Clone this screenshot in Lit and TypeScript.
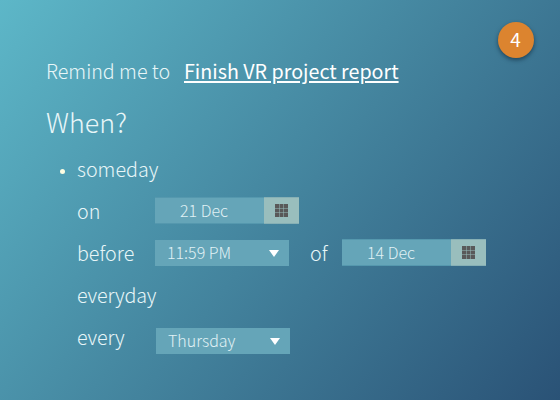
import { LitElement, html, css, svg } from "lit";
import { customElement, property } from "lit/decorators.js";

@customElement("date-field")
class DateField extends LitElement {
  @property() value = "";

  static styles = css`
    :host {
      display: flex;
      width: 144px;
      height: 27px;
      color: #e0f1f5;
      font-size: 16px;
      line-height: 27px;
    }
    .value {
      flex: none;
      box-sizing: border-box;
      width: 109px;
      padding-left: 25px;
      background: #65a5b8;
      box-shadow: inset 0 1px #5598ae, inset 0 -1px #5598ae;
      white-space: nowrap;
    }
    .button {
      display: flex;
      align-items: center;
      justify-content: center;
      width: 35px;
      background: #99bebd;
      box-shadow: inset 0 1px #86b0b5, inset 0 -1px #86b0b5;
    }
    svg { display: block; }
  `;

  render() {
    const steps = [0, 4.5, 9];
    return html`
      <div class="value">${this.value}</div>
      <div class="button">
        <svg width="13" height="13" viewBox="0 0 13 13" fill="#595959">
          ${steps.map((y) => steps.map((x) => svg`<rect x=${x} y=${y} width="4" height="4" />`))}
        </svg>
      </div>
    `;
  }
}

@customElement("select-field")
class SelectField extends LitElement {
  @property() value = "";

  static styles = css`
    :host {
      display: flex;
      box-sizing: border-box;
      justify-content: space-between;
      align-items: center;
      width: 134px;
      height: 26px;
      padding: 0 10px 0 12px;
      background: #65a5b8;
      color: #e0f1f5;
      font-size: 16px;
      line-height: 25px;
      white-space: nowrap;
    }
    span { height: 26px; }
    svg { display: block; }
  `;

  render() {
    return html`
      <span>${this.value}</span>
      <svg width="10" height="7" viewBox="0 0 10 7" fill="#fff"><path d="M0 0h10L5 7z" /></svg>
    `;
  }
}

@customElement("app-root")
class AppRoot extends LitElement {
  static styles = css`
    :host {
      display: block;
      position: relative;
      box-sizing: border-box;
      width: 560px;
      height: 400px;
      padding: 51px 0 0 46px;
      overflow: hidden;
      background: linear-gradient(129deg, #5db7c8 0%, #43839d 52%, #2a5276 100%);
      color: #e8f6f8;
      font-family: "Noto Sans CJK SC", "Noto Sans", sans-serif;
      font-weight: 300;
      font-size: 19.7px;
    }
    .badge {
      position: absolute;
      left: 498px;
      top: 22px;
      width: 36px;
      height: 36px;
      border-radius: 50%;
      background: #dc842f;
      box-shadow: 0 2px 4px rgba(10, 35, 55, 0.6);
      color: #fff;
      font-size: 19px;
      font-weight: 400;
      line-height: 34px;
      text-align: center;
      text-indent: -1px;
    }
    .sentence {
      display: flex;
      height: 40px;
      line-height: 40px;
      white-space: nowrap;
    }
    .lead { width: 138px; }
    .task {
      color: #fff;
      font-weight: 400;
      text-decoration: underline;
      text-decoration-thickness: 2px;
      text-underline-offset: 2px;
    }
    h1 {
      margin: 6px 0 0;
      height: 51px;
      font-size: 26.8px;
      font-weight: 300;
      line-height: 49px;
    }
    ul {
      margin: 0;
      padding: 0 0 0 13px;
      list-style: none;
    }
    li {
      display: flex;
      height: 42px;
      line-height: 42px;
      white-space: nowrap;
    }
    .mark { flex: none; width: 18px; }
    .dot {
      width: 5px;
      height: 5px;
      margin: 21px 0 0 1px;
      border-radius: 50%;
      background: #fdfde2;
    }
    .label { flex: none; width: 78px; }
    .tight { letter-spacing: -0.2px; }
    .of { width: 32px; margin-left: 21px; }
    .on date-field { margin-top: 7px; }
    .before date-field { margin-top: 7px; }
    .before select-field { margin-top: 8px; }
    .every select-field { margin: 12px 0 0 1px; }
  `;

  render() {
    return html`
      <div class="badge">4</div>
      <div class="sentence">
        <span class="lead">Remind me to</span>
        <span class="task">Finish VR project report</span>
      </div>
      <h1>When?</h1>
      <ul>
        <li><span class="mark"><div class="dot"></div></span><span class="label">someday</span></li>
        <li class="on"><span class="mark"></span><span class="label">on</span><date-field value="21 Dec"></date-field></li>
        <li class="before">
          <span class="mark"></span><span class="label">before</span><select-field value="11:59 PM"></select-field>
          <span class="of">of</span><date-field value="14 Dec"></date-field>
        </li>
        <li><span class="mark"></span><span class="label tight">everyday</span></li>
        <li class="every"><span class="mark"></span><span class="label tight">every</span><select-field value="Thursday"></select-field></li>
      </ul>
    `;
  }
}
